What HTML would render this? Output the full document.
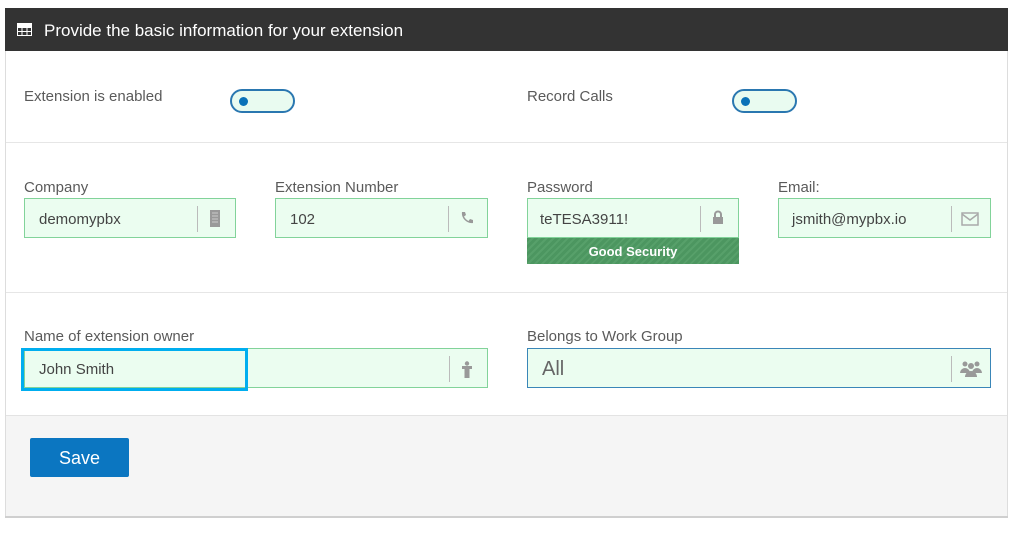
<!DOCTYPE html>
<html><head><style>
body{margin:0;width:1024px;height:538px;background:#fff;font-family:"Liberation Sans",sans-serif;position:relative;overflow:hidden}
.a{position:absolute}
.lbl{position:absolute;font-size:15px;color:#5a5a5a}
.inp{position:absolute;height:40px;border:1px solid #82d39a;background:#ebfdf0;box-sizing:border-box}
.inp .t{position:absolute;left:14px;top:12px;font-size:15px;color:#444}
.inp .sep{position:absolute;top:7px;width:1px;height:26px;background:#bbb}
.tog{position:absolute;width:65px;height:24px;border:2px solid #2a77b0;border-radius:13px;background:#e9fbf0;box-sizing:border-box}
.tog:after{content:"";position:absolute;left:7px;top:6px;width:9px;height:9px;border-radius:50%;background:#0b72b8}
</style></head><body>
<div class="a" style="left:5px;top:8px;width:1003px;height:510px;border:1px solid #ddd;border-top:none;box-sizing:border-box"></div>
<div class="a" style="left:5px;top:8px;width:1003px;height:43px;background:#333"></div>
<svg class="a" style="left:17px;top:23px" width="15" height="13" viewBox="0 0 15 13"><rect x="0.5" y="0.5" width="14" height="12" fill="none" stroke="#fff"/><path d="M0 4.5h15M0 8.5h15M5 0v13M10 0v13" stroke="#fff"/><rect x="0" y="0" width="15" height="4" fill="#fff"/></svg>
<div class="a" style="left:44px;top:21px;font-size:17px;color:#fff">Provide the basic information for your extension</div>

<div class="lbl" style="left:24px;top:88px">Extension is enabled</div>
<div class="tog" style="left:230px;top:89px"></div>
<div class="lbl" style="left:527px;top:88px">Record Calls</div>
<div class="tog" style="left:732px;top:89px"></div>
<div class="a" style="left:6px;top:142px;width:1001px;height:1px;background:#e6e6e6"></div>

<div class="lbl" style="left:24px;top:179px">Company</div>
<div class="inp" style="left:24px;top:198px;width:212px"><span class="t">demomypbx</span><span class="sep" style="left:172px"></span>
<svg class="a" style="left:184px;top:11px" width="12" height="17"><rect x="1" y="0" width="10" height="17" fill="#999"/><path d="M3 3h6M3 6h6M3 9h6M3 12h6" stroke="#ccc"/></svg></div>
<div class="lbl" style="left:275px;top:179px">Extension Number</div>
<div class="inp" style="left:275px;top:198px;width:213px"><span class="t">102</span><span class="sep" style="left:172px"></span>
<svg class="a" style="left:184px;top:12px" width="14" height="14" viewBox="0 0 14 14"><path d="M2 1l3 0 1 3-2 1.5c1 2 2.5 3.5 4.5 4.5L10 8l3 1v3c-6 1-12-5-11-11z" fill="#999"/></svg></div>
<div class="lbl" style="left:527px;top:179px">Password</div>
<div class="inp" style="left:527px;top:198px;width:212px"><span class="t" style="left:12px">teTESA3911!</span><span class="sep" style="left:172px"></span>
<svg class="a" style="left:184px;top:11px" width="12" height="15"><path d="M3 7V4.5a3 3 0 0 1 6 0V7" stroke="#999" stroke-width="2" fill="none"/><rect x="1" y="7" width="10" height="7" fill="#999"/></svg></div>
<div class="a" style="left:527px;top:238px;width:212px;height:26px;background:repeating-linear-gradient(135deg,#4c9660 0 3px,#57a06a 3px 5px);color:#fff;font-weight:bold;font-size:13px;text-align:center;line-height:28px">Good Security</div>
<div class="lbl" style="left:778px;top:179px">Email:</div>
<div class="inp" style="left:778px;top:198px;width:213px"><span class="t" style="left:13px">jsmith@mypbx.io</span><span class="sep" style="left:172px"></span>
<svg class="a" style="left:182px;top:13px" width="18" height="14"><rect x="1" y="1" width="16" height="12" fill="none" stroke="#aaa" stroke-width="1.5"/><path d="M1 2l8 6 8-6" stroke="#aaa" stroke-width="1.5" fill="none"/></svg></div>
<div class="a" style="left:6px;top:292px;width:1001px;height:1px;background:#e6e6e6"></div>

<div class="lbl" style="left:24px;top:328px">Name of extension owner</div>
<div class="inp" style="left:24px;top:348px;width:464px"><span class="t">John Smith</span><span class="sep" style="left:424px"></span>
<svg class="a" style="left:437px;top:12px" width="10" height="17"><circle cx="5" cy="2.5" r="2.2" fill="#999"/><path d="M0 5h10v3h-2.5v9h-5V8H0z" fill="#999"/></svg></div>
<div class="a" style="left:21px;top:348px;width:227px;height:43px;border:3px solid #00aeef;box-sizing:border-box"></div>
<div class="lbl" style="left:527px;top:328px">Belongs to Work Group</div>
<div class="inp" style="left:527px;top:348px;width:464px;border-color:#3a86b8"><span class="t" style="top:9px;font-size:20px;color:#666">All</span><span class="sep" style="left:423px"></span>
<svg class="a" style="left:432px;top:12px" width="22" height="16"><circle cx="5" cy="3" r="2.5" fill="#999"/><circle cx="17" cy="3" r="2.5" fill="#999"/><circle cx="11" cy="5" r="3" fill="#999"/><path d="M0 12a5 5 0 0 1 10 0zM12 12a5 5 0 0 1 10 0zM5 16a6 6 0 0 1 12 0z" fill="#999"/></svg></div>

<div class="a" style="left:6px;top:415px;width:1001px;height:101px;background:#f5f5f5;border-top:1px solid #e3e3e3"></div>
<div class="a" style="left:5px;top:516px;width:1003px;height:2px;background:#cfcfcf"></div>
<div class="a" style="left:30px;top:438px;width:99px;height:39px;background:#0b76c1;border-radius:2px;color:#fff;font-size:18px;text-align:center;line-height:40px">Save</div>
</body></html>
